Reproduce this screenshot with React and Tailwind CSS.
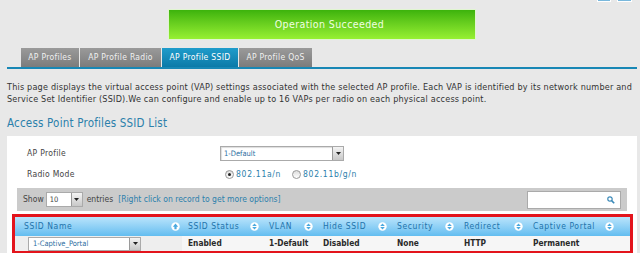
import React from "react";

const font = { fontFamily: '"DejaVu Sans Condensed", "DejaVu Sans", Tahoma, sans-serif' };

function SortIcon({ up }) {
  return (
    <svg width="9" height="9" viewBox="0 0 9 9" className="shrink-0">
      <circle cx="4.5" cy="4.5" r="4.2" fill="#ffffff" />
      {up ? (
        <path d="M4.5 1.6 L7.2 4.8 H5.6 V7.2 H3.4 V4.8 H1.8 Z" fill="#4aa9df" />
      ) : (
        <>
          <path d="M4.5 1.4 L6.8 3.9 H2.2 Z" fill="#4aa9df" />
          <path d="M4.5 7.6 L6.8 5.1 H2.2 Z" fill="#4aa9df" />
        </>
      )}
    </svg>
  );
}

function DropButton() {
  return (
    <div className="w-[11px] h-full bg-gradient-to-b from-[#f4f4f4] to-[#c8c8c8] border-l border-[#9a9a9a] flex items-center justify-center">
      <svg width="5" height="3" viewBox="0 0 5 3">
        <path d="M0 0 H5 L2.5 3 Z" fill="#222" />
      </svg>
    </div>
  );
}

function Radio({ checked }) {
  return (
    <span className="w-[9px] h-[9px] rounded-full border border-[#999] bg-gradient-to-b from-[#ddd] to-white flex items-center justify-center">
      {checked && <span className="w-[3px] h-[3px] rounded-full bg-[#222]" />}
    </span>
  );
}

export default function App() {
  const tabs = ["AP Profiles", "AP Profile Radio", "AP Profile SSID", "AP Profile QoS"];
  const widths = ["w-[58px]", "w-[81px]", "w-[76px]", "w-[73px]"];
  const cols = [
    { name: "SSID Status", w: "w-[81px]", val: "Enabled" },
    { name: "VLAN", w: "w-[54px]", val: "1-Default" },
    { name: "Hide SSID", w: "w-[74px]", val: "Disabled" },
    { name: "Security", w: "w-[67px]", val: "None" },
    { name: "Redirect", w: "w-[69px]", val: "HTTP" },
    { name: "Captive Portal", w: "w-[91px]", val: "Permanent" },
  ];

  return (
    <div className="w-[640px] h-[253px] bg-[#e8e8e8] overflow-hidden text-[#444] whitespace-nowrap" style={font}>
      <div className="flex justify-end gap-[6px] pr-[8px] h-0">
        <div className="w-[14px] h-[3px] -mt-[1px] bg-[#7ab8dc] border border-white border-t-0" />
        <div className="w-[15px] h-[3px] -mt-[1px] bg-[#7ab8dc] border border-white border-t-0" />
      </div>

      <div className="pt-[9px] pl-[168px]">
        <div className="w-[308px] h-[31px] bg-gradient-to-b from-[#3cb30c] to-[#96f032] border border-[#e0f5d0] flex items-center justify-center pl-[15px] text-[10.5px] tracking-[0.4px] text-[#f0ffe0]">
          Operation Succeeded
        </div>
      </div>

      <div className="mt-[8px] pl-[21px] flex items-end h-[19px]">
        {tabs.map((t, i) => (
          <div
            key={t}
            className={`${widths[i]} h-[19px] mr-px flex items-center justify-center text-[8.5px] tracking-[0.3px] ${
              i === 2
                ? "bg-gradient-to-b from-[#1f9ccb] to-[#0b7aa8] text-white"
                : "bg-gradient-to-b from-[#9a9a9a] to-[#7c7c7c] text-[#f0f0f0]"
            }`}
          >
            {t}
          </div>
        ))}
      </div>
      <div className="ml-[7px] mr-[3px] h-[2px] bg-[#1887b5]" />

      <div className="px-[7px] pt-[12px] text-[9px] leading-[12px] tracking-[0.2px] text-[#333]">
        <p>
          This page displays the virtual access point (VAP) settings associated with the selected AP profile. Each VAP is identified by its network number and
        </p>
        <p>Service Set Identifier (SSID).We can configure and enable up to 16 VAPs per radio on each physical access point.</p>
      </div>

      <div className="px-[7px] pt-[11px] text-[11.5px] leading-[14px] text-[#2b80ab] tracking-[0.2px]">
        Access Point Profiles SSID List
      </div>

      <div className="ml-[7px] mr-[3px] mt-[6px] bg-white pt-[10px] h-[200px]">
        <div className="flex items-center h-[14px] text-[8.5px] tracking-[0.3px]">
          <span className="pl-[20px] w-[213px]">AP Profile</span>
          <div className="w-[124px] h-[15px] border border-[#aaa] flex text-[7.5px] tracking-normal text-[#2b6ea0] shadow-[inset_1px_1px_1px_#ddd]">
            <span className="flex-1 pl-[3px] leading-[13px]">1-Default</span>
            <DropButton />
          </div>
        </div>
        <div className="flex items-center h-[14px] mt-[7px] text-[8.5px] tracking-[0.3px]">
          <span className="pl-[20px] w-[218px]">Radio Mode</span>
          <Radio checked />
          <span className="ml-[2px] w-[56px] text-[#2b80ab] tracking-[0.7px]">802.11a/n</span>
          <Radio />
          <span className="ml-[2px] text-[#2b80ab] tracking-[0.7px]">802.11b/g/n</span>
        </div>

        <div className="mx-[10px] mt-[7px] bg-[#cbcbcb] h-[23px] flex items-center text-[8.5px] px-[6px]">
          <span>Show</span>
          <div className="ml-[2px] w-[37px] h-[15px] bg-white border border-[#aaa] flex text-[7.5px]">
            <span className="flex-1 pl-[3px] leading-[13px]">10</span>
            <DropButton />
          </div>
          <span className="ml-[4px]">entries</span>
          <span className="ml-[5px] text-[#2b80ab]">[Right click on record to get more options]</span>
          <div className="ml-auto w-[94px] h-[18px] bg-white border border-[#aaa] flex items-center justify-end pr-[5px]">
            <svg width="8" height="8" viewBox="0 0 8 8">
              <circle cx="3" cy="3" r="2.2" fill="none" stroke="#3a89b8" strokeWidth="1.2" />
              <path d="M4.6 4.6 L7.2 7.2" stroke="#3a89b8" strokeWidth="1.6" />
            </svg>
          </div>
        </div>

        <div className="ml-[5px] mr-[4px] mt-[3px] border-[3px] border-[#e3141c] h-[40px]">
          <div className="flex h-[19px] bg-gradient-to-b from-[#b9e4fb] to-[#62bdf0] text-[8.5px] tracking-[0.6px] text-[#1f73ab]">
            <div className="w-[167px] flex items-center pl-[9px] pr-[2px] justify-between">
              <span>SSID Name</span>
              <SortIcon up />
            </div>
            {cols.map((c) => (
              <div key={c.name} className={`${c.w} flex items-center pl-[6px] pr-[4px] justify-between`}>
                <span>{c.name}</span>
                <SortIcon />
              </div>
            ))}
          </div>
          <div className="flex h-[15px] text-[8.3px] font-semibold text-[#2a2a2a]">
            <div className="w-[167px] bg-[#eeeeee] flex items-center pl-[13px]">
              <div className="w-[113px] h-[14px] bg-white border border-[#aaa] flex text-[7.5px] font-normal text-[#2b6ea0]">
                <span className="flex-1 pl-[4px] leading-[12px]">1-Captive_Portal</span>
                <DropButton />
              </div>
            </div>
            <div className="flex-1 flex bg-[#f6f6f6]">
              {cols.map((c) => (
                <div key={c.name} className={`${c.w} flex items-center pl-[6px]`}>
                  {c.val}
                </div>
              ))}
            </div>
          </div>
        </div>
      </div>
    </div>
  );
}
